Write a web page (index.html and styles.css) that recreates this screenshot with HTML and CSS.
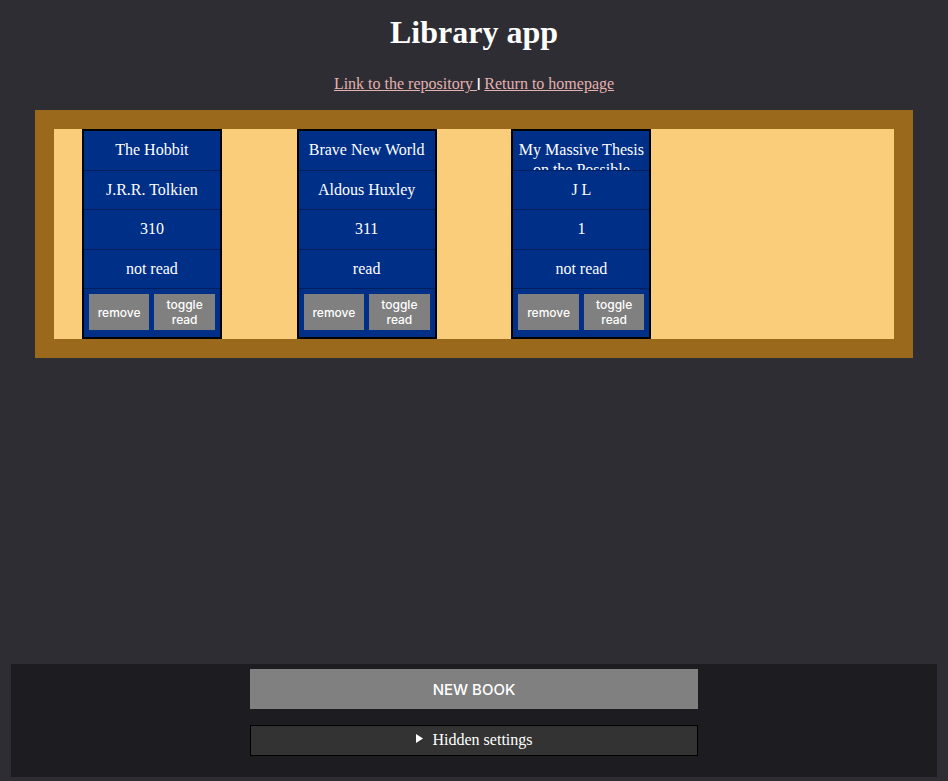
FILE: index.html
```html
<!DOCTYPE html>
<html lang="en">
<head>
<meta charset="utf-8">
<title>Library app</title>
<link rel="stylesheet" href="styles.css">
</head>
<body>
<header class="header">
  <h1>Library app</h1>
  <p class="links"><a href="#repository">Link to the repository </a><span class="divider">|</span><a href="#home">Return to homepage</a></p>
</header>
<main class="shelf">
  <article class="book">
    <div class="field">The Hobbit</div>
    <div class="field">J.R.R. Tolkien</div>
    <div class="field">310</div>
    <div class="field">not read</div>
    <div class="actions"><button type="button">remove</button><button type="button">toggle read</button></div>
  </article>
  <article class="book">
    <div class="field">Brave New World</div>
    <div class="field">Aldous Huxley</div>
    <div class="field">311</div>
    <div class="field">read</div>
    <div class="actions"><button type="button">remove</button><button type="button">toggle read</button></div>
  </article>
  <article class="book">
    <div class="field">My Massive Thesis on the Possible</div>
    <div class="field">J L</div>
    <div class="field">1</div>
    <div class="field">not read</div>
    <div class="actions"><button type="button">remove</button><button type="button">toggle read</button></div>
  </article>
</main>
<footer class="footer">
  <button type="button" class="new-book">NEW BOOK</button>
  <details class="settings">
    <summary><svg class="marker" width="7" height="9" viewBox="0 0 7 9" aria-hidden="true"><path d="M0 0L7 4.5L0 9Z" fill="currentColor"/></svg>Hidden settings</summary>
  </details>
</footer>
</body>
</html>
```
FILE: styles.css
```css
* {
  box-sizing: border-box;
}

body {
  display: flex;
  flex-direction: column;
  min-height: 100vh;
  margin: 0;
  padding: 0 11px 4px;
  background: #2e2d33;
  color: #fff;
  font: 16px/20px "Liberation Serif", "Times New Roman", serif;
}

.header {
  text-align: center;
}

h1 {
  margin: 12px 0 22px;
  font-size: 32px;
  line-height: 40px;
}

.links {
  margin: 0 0 16px;
}

.links a {
  color: #e2b1b1;
  white-space: pre;
}

.divider {
  margin-right: 4px;
  font: bold 12px/12px "Liberation Sans", sans-serif;
  vertical-align: 2px;
}

.shelf {
  display: grid;
  grid-template-columns: repeat(4, 1fr);
  gap: 19px;
  justify-items: center;
  margin: 0 24px;
  border: 19px solid #9b691b;
  background: #facd7a;
}

.book {
  display: grid;
  grid-template-rows: repeat(4, minmax(0, 1fr)) 48px;
  width: 140px;
  height: 210px;
  border: 2px solid #000;
  background: #002f87;
}

.field {
  overflow: hidden;
  padding: 9px 4px 0;
  border-bottom: 1px solid #001f5c;
  text-align: center;
}

.actions {
  display: grid;
  grid-template-columns: 1fr 1fr;
  gap: 5px;
  align-items: start;
  padding: 5px;
}

button {
  border: 0;
  padding: 0;
  background: #808080;
  color: #fff;
  font-family: Inter, sans-serif;
  font-weight: 500;
}

.actions button {
  height: 36px;
  padding: 0 6px;
  font-size: 12px;
  line-height: 15px;
}

.footer {
  display: flex;
  flex-direction: column;
  align-items: center;
  gap: 16px;
  margin-top: auto;
  padding: 5px 5px 21px;
  background: #1d1c20;
}

.new-book {
  width: 100%;
  max-width: 448px;
  height: 40px;
  font-size: 15px;
}

.settings {
  width: 100%;
  max-width: 448px;
  border: 1px solid #000;
  background: #333;
}

summary {
  padding: 4px 0 5px;
  list-style: none;
  text-align: center;
}

.marker {
  margin-right: 10px;
  vertical-align: 2px;
}
```
